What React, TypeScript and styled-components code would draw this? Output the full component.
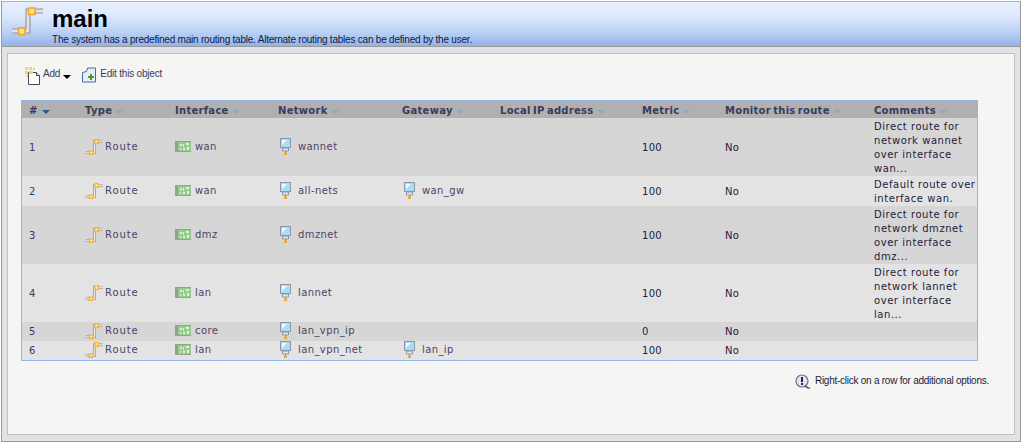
import * as React from 'react';
import styled, { createGlobalStyle } from 'styled-components';

const GlobalStyle = createGlobalStyle`
    html, body { margin: 0; padding: 0; background: #fff; }
    body { font-family: 'DejaVu Sans', Verdana, sans-serif; }
`;

const Page = styled.div`
    width: 1020px;
    height: 441px;
    margin: 1px 1px 0 1px;
    box-sizing: border-box;
    display: flex;
    flex-direction: column;
    background: #e2e2e6;
    border-left: 1px solid #9a9a9a;
    border-right: 1px solid #9a9a9a;
    border-bottom: 1px solid #9a9a9a;
    overflow: hidden;
`;

const Header = styled.header`
    height: 46px;
    flex: none;
    box-sizing: border-box;
    display: flex;
    padding: 3px 0 0 9px;
    background: linear-gradient(#e6efff 0%, #dfe9fd 30%, #b9cff5 70%, #93b3e6 100%);
    border-top: 1px solid #9ab6ea;
    border-bottom: 1px solid #9a9a9a;
`;

const HeaderText = styled.div`
    margin: -3px 0 0 9px;
    display: flex;
    flex-direction: column;
`;

const Title = styled.h1`
    margin: 0;
    height: 31px;
    font: bold 24px/33px 'Liberation Sans', Arial, sans-serif;
    color: #000;
`;

const Subtitle = styled.div`
    font: 10px/14px 'Liberation Sans', Tahoma, sans-serif;
    letter-spacing: -0.22px;
    color: #0c1a44;
`;

const Panel = styled.main`
    flex: 1;
    margin: 6px 5px 6px 5px;
    padding: 13px 13px 0 13px;
    background: #f5f5f3;
    border: 1px solid #c0c0c0;
    display: flex;
    flex-direction: column;
`;

const Toolbar = styled.div`
    height: 33px;
    display: flex;
    align-items: flex-start;
    padding-left: 4px;
`;

const ToolButton = styled.div`
    display: flex;
    align-items: flex-start;
    margin-right: 11px;
    font: 10px/13px 'Liberation Sans', Tahoma, sans-serif;
    letter-spacing: -0.2px;
    color: #3a3a5c;
`;

const ToolLabel = styled.span`
    margin-left: 3px;
`;

const AddLabel = styled.span`
    margin-left: 2px;
`;

const Caret = styled.span`
    width: 0;
    height: 0;
    margin: 8px 0 0 3px;
    border-left: 4px solid transparent;
    border-right: 4px solid transparent;
    border-top: 4px solid #000;
`;

const Table = styled.table`
    width: 957px;
    box-sizing: border-box;
    border-collapse: separate;
    border-spacing: 0;
    table-layout: fixed;
    border: 1px solid #94b4ec;
    font-size: 10px;
    letter-spacing: 0.32px;
`;

const HeadRow = styled.tr`
    height: 17px;
    background: #b0b0b0;
`;

const Th = styled.th`
    padding: 2px 0 0 7px;
    text-align: left;
    white-space: nowrap;
    font: bold 10px 'DejaVu Sans', Verdana, sans-serif;
    letter-spacing: 0.28px;
    word-spacing: -1.5px;
    color: #3a3a5c;
`;

const SortMark = styled.span<{ $active?: boolean }>`
    display: inline-block;
    width: 0;
    height: 0;
    margin-left: ${p => (p.$active ? '4px' : '3px')};
    vertical-align: 0;
    border-left: 4px solid transparent;
    border-right: 4px solid transparent;
    border-top: 4px solid ${p => (p.$active ? '#1f5c96' : '#99a6b4')};
`;

const Row = styled.tr<{ $height: number; $alt: boolean }>`
    height: ${p => p.$height}px;
    background: ${p => (p.$alt ? '#e3e3e3' : '#d6d6d6')};
`;

const Td = styled.td<{ $dark?: boolean; $top?: number }>`
    padding: ${p => p.$top ?? 1}px 0 0 7px;
    vertical-align: middle;
    color: ${p => (p.$dark ? '#1c1c3c' : '#3a3a5c')};
    line-height: 14px;
`;

const Comment = styled(Td)`
    padding-top: 2px;
    color: #1c1c3c;
    letter-spacing: 0.55px;
`;

const IconCell = styled.div<{ $wide?: boolean }>`
    display: flex;
    align-items: center;
    height: 16px;
    margin-top: -2px;
    white-space: nowrap;
    letter-spacing: ${p => (p.$wide ? '0.9px' : '0.4px')};
    color: #4a4468;
`;

const IconSlot = styled.span<{ $width: number; $inset?: number }>`
    width: ${p => p.$width}px;
    padding-left: ${p => p.$inset || 0}px;
    box-sizing: border-box;
    flex: none;
    display: flex;
`;

const Hint = styled.div`
    display: flex;
    align-items: center;
    justify-content: flex-end;
    margin: 12px 12px 0 0;
    font: 10px/16px 'Liberation Sans', Tahoma, sans-serif;
    letter-spacing: -0.25px;
    color: #1c1c3c;
`;

const HintIcon = styled.span`
    display: flex;
    margin-right: 5px;
`;

const RouteIcon = ({ size = 18 }: { size?: number }) => (
    <svg width={size} height={size} viewBox="0 0 32 32">
        <path d="M1 26h16V6h15" fill="none" stroke="#8d919a" strokeWidth="5" />
        <path d="M1 26h16V6h15" fill="none" stroke="#e2e4e8" strokeWidth="2.8" />
        <rect x="17.5" y="3" width="6.5" height="6.5" fill="#ffe08a" stroke="#f5a623" strokeWidth="1.6" />
        <rect x="7.5" y="23" width="6.5" height="6.5" fill="#ffe08a" stroke="#f5a623" strokeWidth="1.6" />
    </svg>
);

const InterfaceIcon = () => (
    <svg width="16" height="11" viewBox="0 0 16 11">
        <rect x="0" y="0" width="3" height="11" fill="#9a9c98" />
        <rect x="3" y="0" width="13" height="11" fill="#96cc8c" />
        <path d="M3 0h13v1H3zM3 10h13v1H3z" fill="#8ea88a" />
        <path d="M5 3h2v2H5zM8 7h2v2H8zM11 2h3v2h-3zM5 7h1v2H5zM8 3h1v3H8zM12 6h2v3h-2z" fill="#dff2da" />
    </svg>
);

const NetworkIcon = () => (
    <svg width="11" height="17" viewBox="0 0 11 17">
        <rect x="0.5" y="0.5" width="10" height="9" fill="#a6def8" stroke="#8f96a6" />
        <path d="M2 2h5L2 7z" fill="#eefaff" />
        <path d="M2.5 10h6v3h-6z" fill="#e2e5ea" stroke="#8f96a6" />
        <path d="M5.5 13v2" stroke="#8f96a6" />
        <rect x="4" y="14.5" width="3" height="2.5" fill="#f0a830" />
    </svg>
);

const AddIcon = () => (
    <svg width="16" height="18" viewBox="0 0 16 18">
        <path d="M3.5 5.5h8l3 3v9h-11z" fill="#fff" stroke="#3c4a66" />
        <path d="M11.5 5.5v3h3" fill="#dde6f4" stroke="#3c4a66" />
        <g fill="#f4d45a">
            <rect x="0" y="0" width="3" height="3" />
            <rect x="4" y="0" width="3" height="3" />
            <rect x="8" y="1" width="2" height="2" />
            <rect x="0" y="4" width="3" height="3" />
            <rect x="4" y="4" width="4" height="3" />
            <rect x="1" y="8" width="2" height="2" />
        </g>
    </svg>
);

const EditIcon = () => (
    <svg width="15" height="16" viewBox="0 0 15 16">
        <path d="M0.5 5.5l4-1 1-3.5h8v14h-13z" fill="#e6effb" stroke="#4a6aa0" />
        <path d="M6 9h2V7h2v2h2v2h-2v2H8v-2H6z" fill="#3f9a32" />
    </svg>
);

const InfoIcon = () => (
    <svg width="15" height="15" viewBox="0 0 15 15">
        <circle cx="7" cy="7" r="6" fill="#dfe4ee" stroke="#6a7488" strokeWidth="1.2" />
        <rect x="6" y="3" width="2" height="5" fill="#1c2440" />
        <rect x="6" y="9" width="2" height="2" fill="#1c2440" />
        <path d="M10 12l3 2h2" fill="none" stroke="#1c2440" strokeWidth="1.2" />
    </svg>
);

const columns: Array<[string, number]> = [
    ['#', 56],
    ['Type', 90],
    ['Interface', 103],
    ['Network', 124],
    ['Gateway', 98],
    ['Local IP address', 142],
    ['Metric', 83],
    ['Monitor this route', 149],
    ['Comments', 110]
];

const rows = [
    { id: 1, height: 58, iface: 'wan', network: 'wannet', gateway: '', metric: '100', comment: 'Direct route for network wannet over interface wan...' },
    { id: 2, height: 30, iface: 'wan', network: 'all-nets', gateway: 'wan_gw', metric: '100', comment: 'Default route over interface wan.' },
    { id: 3, height: 58, iface: 'dmz', network: 'dmznet', gateway: '', metric: '100', comment: 'Direct route for network dmznet over interface dmz...' },
    { id: 4, height: 58, iface: 'lan', network: 'lannet', gateway: '', metric: '100', comment: 'Direct route for network lannet over interface lan...' },
    { id: 5, height: 19, iface: 'core', network: 'lan_vpn_ip', gateway: '', metric: '0', comment: '' },
    { id: 6, height: 19, iface: 'lan', network: 'lan_vpn_net', gateway: 'lan_ip', metric: '100', comment: '' }
];

const App = () => (
    <Page>
        <GlobalStyle />
        <Header>
            <RouteIcon size={32} />
            <HeaderText>
                <Title>main</Title>
                <Subtitle>The system has a predefined main routing table. Alternate routing tables can be defined by the user.</Subtitle>
            </HeaderText>
        </Header>
        <Panel>
            <Toolbar>
                <ToolButton>
                    <AddIcon />
                    <AddLabel>Add</AddLabel>
                    <Caret />
                </ToolButton>
                <ToolButton>
                    <EditIcon />
                    <ToolLabel>Edit this object</ToolLabel>
                </ToolButton>
            </Toolbar>
            <Table>
                <colgroup>
                    {columns.map(([name, width]) => <col key={name} width={width} />)}
                </colgroup>
                <thead>
                    <HeadRow>
                        {columns.map(([name], i) => (
                            <Th key={name}>{name}<SortMark $active={i === 0} /></Th>
                        ))}
                    </HeadRow>
                </thead>
                <tbody>
                    {rows.map((row, i) => {
                        const top = row.height < 20 ? 0 : 1;
                        return (
                            <Row key={row.id} $height={row.height} $alt={i % 2 === 1}>
                                <Td $top={top}>{row.id}</Td>
                                <Td $top={top}>
                                    <IconCell $wide><IconSlot $width={20}><RouteIcon /></IconSlot>Route</IconCell>
                                </Td>
                                <Td $top={top}>
                                    <IconCell><IconSlot $width={20}><InterfaceIcon /></IconSlot>{row.iface}</IconCell>
                                </Td>
                                <Td $top={top}>
                                    <IconCell><IconSlot $width={20} $inset={2}><NetworkIcon /></IconSlot>{row.network}</IconCell>
                                </Td>
                                <Td $top={top}>
                                    {row.gateway && (
                                        <IconCell><IconSlot $width={20} $inset={2}><NetworkIcon /></IconSlot>{row.gateway}</IconCell>
                                    )}
                                </Td>
                                <Td $top={top} />
                                <Td $top={top} $dark>{row.metric}</Td>
                                <Td $top={top} $dark>No</Td>
                                <Comment>{row.comment}</Comment>
                            </Row>
                        );
                    })}
                </tbody>
            </Table>
            <Hint>
                <HintIcon><InfoIcon /></HintIcon>
                Right-click on a row for additional options.
            </Hint>
        </Panel>
    </Page>
);

export default App;
